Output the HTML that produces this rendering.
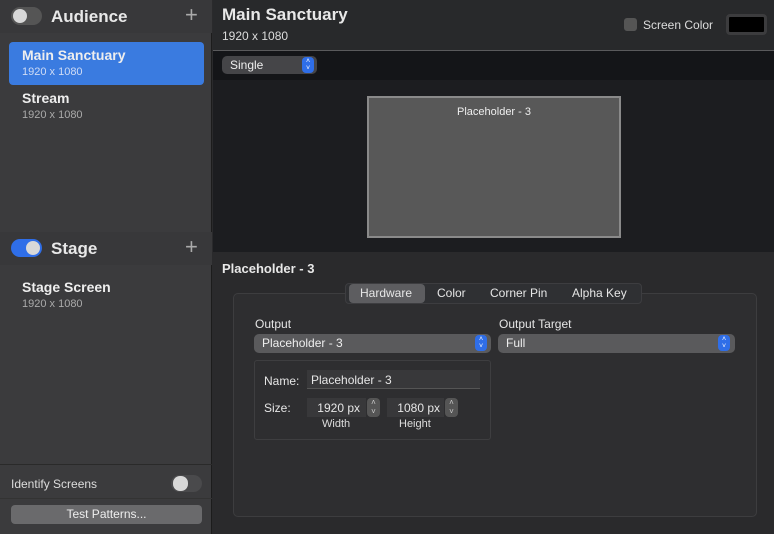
<!DOCTYPE html>
<html><head><style>
*{margin:0;padding:0;box-sizing:border-box}
body{width:774px;height:534px;background:#2a2a2c;font-family:"Liberation Sans",sans-serif;color:#e6e6e6;position:relative;overflow:hidden;font-size:12px}
.a{position:absolute}
.sb{left:0;top:0;width:212px;height:534px;background:#3b3b3d;border-right:1px solid #1c1c1c}
.hdr{left:0;width:212px;height:33px;background:#38383a}
.tog{width:31px;height:18px;border-radius:9px;background:#555}
.tog i{position:absolute;top:2px;width:14px;height:14px;border-radius:7px;background:#d8d8d8}
.t1{font-size:17px;font-weight:bold;color:#e8e8e8}
.plus{font-size:22px;color:#aaa;font-weight:300}
.nm{font-size:14px;font-weight:bold;color:#eee}
.sz{font-size:11px;color:#aaa}
.stp{width:12px;height:16px;border-radius:4px;background:#2f6ee8;color:#fff;font-size:7px;line-height:7px;text-align:center;padding-top:1px}
.pop{background:#5a5a5c;border-radius:5px;height:18px;font-size:12px;padding:2px 8px;color:#eee}
</style></head><body>
<div class="a sb"></div>
<div class="a hdr" style="top:0"></div>
<div class="a tog" style="left:11px;top:7px"><i style="left:2px"></i></div>
<div class="a t1" style="left:51px;top:7px">Audience</div>
<div class="a plus" style="left:185px;top:2px">+</div>
<div class="a" style="left:9px;top:42px;width:195px;height:43px;background:#3a7be0;border-radius:4px"></div>
<div class="a nm" style="left:22px;top:47px">Main Sanctuary</div>
<div class="a sz" style="left:22px;top:66px;color:#cfdcf5">1920 x 1080</div>
<div class="a nm" style="left:22px;top:90px">Stream</div>
<div class="a sz" style="left:22px;top:109px">1920 x 1080</div>
<div class="a hdr" style="top:232px"></div>
<div class="a tog" style="left:11px;top:239px;background:#2f6ee8"><i style="left:15px"></i></div>
<div class="a t1" style="left:51px;top:239px">Stage</div>
<div class="a plus" style="left:185px;top:234px">+</div>
<div class="a nm" style="left:22px;top:279px">Stage Screen</div>
<div class="a sz" style="left:22px;top:298px">1920 x 1080</div>
<div class="a" style="left:0;top:464px;width:212px;border-top:1px solid #2a2a2a"></div>
<div class="a" style="left:11px;top:477px;font-size:12px;color:#ddd">Identify Screens</div>
<div class="a tog" style="left:171px;top:475px;width:31px;height:17px;background:#4a4a4c"><i style="left:2px;top:1px;width:15px;height:15px"></i></div>
<div class="a" style="left:0;top:498px;width:212px;border-top:1px solid #333"></div>
<div class="a" style="left:11px;top:505px;width:191px;height:19px;background:#6a6a6c;border-radius:4px;text-align:center;font-size:12px;line-height:19px;color:#eee">Test Patterns...</div>

<div class="a" style="left:213px;top:0;width:561px;height:50px;background:#28292b"></div>
<div class="a" style="left:222px;top:5px;font-size:17px;font-weight:bold;color:#e8e8e8">Main Sanctuary</div>
<div class="a" style="left:222px;top:29px;font-size:12px;color:#ddd">1920 x 1080</div>
<div class="a" style="left:624px;top:18px;width:13px;height:13px;border-radius:3px;background:#555"></div>
<div class="a" style="left:643px;top:18px;font-size:12px;color:#ddd">Screen Color</div>
<div class="a" style="left:726px;top:14px;width:41px;height:21px;border-radius:4px;background:#000;border:3px solid #3c3c3e"></div>
<div class="a" style="left:213px;top:50px;width:561px;height:1px;background:#5a5a5c"></div>
<div class="a" style="left:213px;top:51px;width:561px;height:29px;background:#141518"></div>
<div class="a" style="left:213px;top:80px;width:561px;height:172px;background:#1c1d20"></div>
<div class="a pop" style="left:222px;top:56px;width:95px;height:18px;background:#454548">Single</div>
<div class="a stp" style="left:302px;top:57px">˄<br>˅</div>
<div class="a" style="left:367px;top:96px;width:254px;height:142px;background:#585858;border:2px solid #8a8a8a;text-align:center;font-size:11px;padding-top:8px;color:#eee">Placeholder - 3</div>
<div class="a" style="left:222px;top:261px;font-size:13px;font-weight:bold;color:#e8e8e8">Placeholder - 3</div>
<div class="a" style="left:233px;top:293px;width:524px;height:224px;border:1px solid #3d3d3f;border-radius:5px;background:#2e2e30"></div>
<div class="a" style="left:345px;top:283px;width:297px;height:21px;border-radius:4px;background:#2f3033;border:1px solid #3d3d40"></div>
<div class="a" style="left:349px;top:284px;width:76px;height:19px;border-radius:4px;background:#5d5d60"></div>
<div class="a" style="left:360px;top:286px;font-size:12px">Hardware</div>
<div class="a" style="left:437px;top:286px;font-size:12px">Color</div>
<div class="a" style="left:490px;top:286px;font-size:12px">Corner Pin</div>
<div class="a" style="left:572px;top:286px;font-size:12px">Alpha Key</div>
<div class="a" style="left:255px;top:317px;font-size:12px">Output</div>
<div class="a pop" style="left:254px;top:334px;width:237px;height:19px">Placeholder - 3</div>
<div class="a stp" style="left:475px;top:335px">˄<br>˅</div>
<div class="a" style="left:499px;top:317px;font-size:12px">Output Target</div>
<div class="a pop" style="left:498px;top:334px;width:237px;height:19px">Full</div>
<div class="a stp" style="left:718px;top:335px">˄<br>˅</div>
<div class="a" style="left:254px;top:360px;width:237px;height:80px;border:1px solid #3e3e40;border-radius:3px"></div>
<div class="a" style="left:264px;top:374px;font-size:12px">Name:</div>
<div class="a" style="left:307px;top:370px;width:173px;height:19px;background:#38383a;border-bottom:1px solid #555;font-size:12px;padding:3px 4px">Placeholder - 3</div>
<div class="a" style="left:264px;top:401px;font-size:12px">Size:</div>
<div class="a" style="left:307px;top:398px;width:59px;height:19px;background:#38383a;font-size:12px;padding:3px 6px;text-align:right">1920 px</div>
<div class="a" style="left:367px;top:398px;width:13px;height:19px;border-radius:4px;background:#555;font-size:8px;text-align:center;line-height:9px;color:#ccc">˄<br>˅</div>
<div class="a" style="left:387px;top:398px;width:57px;height:19px;background:#38383a;font-size:12px;padding:3px 4px;text-align:right">1080 px</div>
<div class="a" style="left:445px;top:398px;width:13px;height:19px;border-radius:4px;background:#555;font-size:8px;text-align:center;line-height:9px;color:#ccc">˄<br>˅</div>
<div class="a" style="left:322px;top:418px;font-size:11px;color:#ddd">Width</div>
<div class="a" style="left:399px;top:418px;font-size:11px;color:#ddd">Height</div>
</body></html>
